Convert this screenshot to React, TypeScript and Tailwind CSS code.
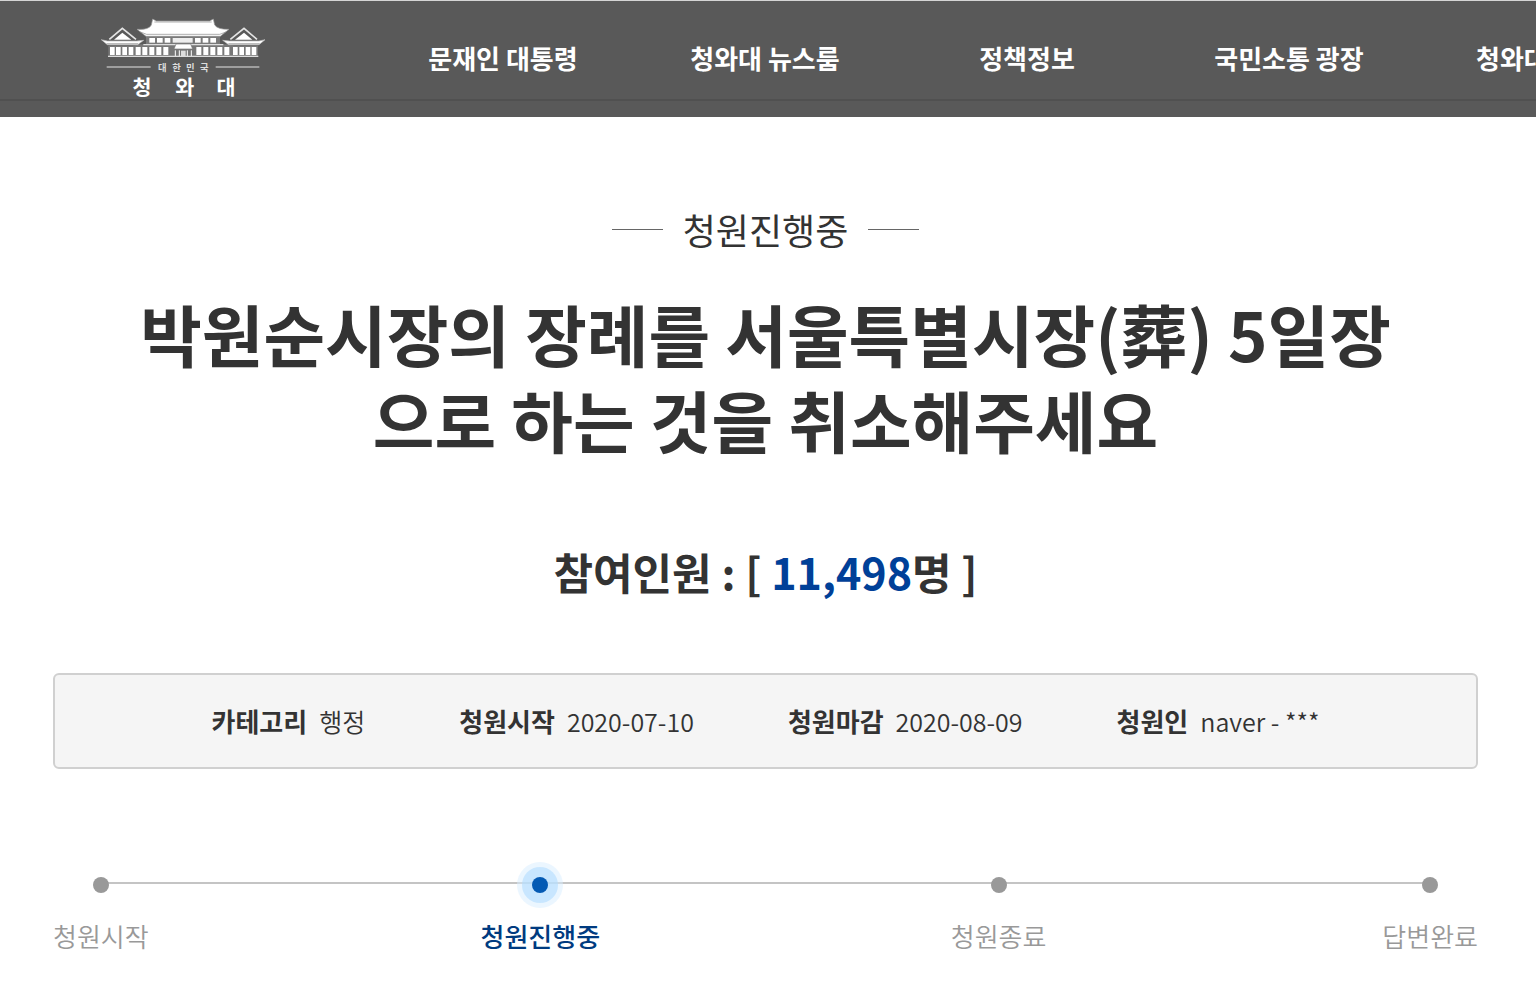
const NAV_ITEMS = ["문재인 대통령", "청와대 뉴스룸", "정책정보", "국민소통 광장"];

const META: Array<{ label: string; value: string }> = [
  { label: "카테고리", value: "행정" },
  { label: "청원시작", value: "2020-07-10" },
  { label: "청원마감", value: "2020-08-09" },
  { label: "청원인", value: "naver - ***" },
];

const STEPS = ["청원시작", "청원진행중", "청원종료", "답변완료"];
const CURRENT_STEP = 1;

const SIDE_WINDOWS = [60, 78, 97, 116];
const HALL_WINDOWS = [137, 157, 178, 199, 220, 319, 340, 361, 382, 403];
const UPPER_WINDOWS = [178, 201, 224, 315, 338, 361];

function Wing() {
  return (
    <g>
      <path d="M58 118 L97 85 L138 118" fill="none" stroke="#e4e4e4" strokeWidth="5" />
      <path d="M72 119 L97 98 L124 119 Z" fill="#fff" />
      <path d="M34 119 L52 123 H140 L161 121 L143 134 H52 Z" fill="#fff" stroke="#bbb" strokeWidth="2" />
      <path d="M50 131 H144" stroke="#888" strokeWidth="2" />
      <path d="M55 136 H135 V168 H55 Z" fill="#777" />
      {SIDE_WINDOWS.map((x) => (
        <rect key={x} x={x} y="141" width="14" height="24" fill="#fff" />
      ))}
    </g>
  );
}

function Logo() {
  return (
    <svg
      viewBox="30 48 498 252"
      className="h-[84px] w-[166px]"
      role="img"
      aria-label="대한민국 청와대"
    >
      <path d="M130 133 H430 V169 H130 Z" fill="#777" />
      {HALL_WINDOWS.map((x) => (
        <rect key={x} x={x} y="141" width="15" height="24" fill="#fff" />
      ))}
      <path d="M168 110 H390 V132 H168 Z" fill="#7a7a7a" />
      {UPPER_WINDOWS.map((x) => (
        <rect key={x} x={x} y="114" width="17" height="14" fill="#fff" />
      ))}
      <rect x="248" y="114" width="60" height="14" fill="#eee" />
      <path d="M160 134 H400" stroke="#ddd" strokeWidth="4" />
      <path
        d="M188 57 L199 63 H359 L370 57 L374 75 Q384 89 417 88 L391 109 H168 L141 88 Q177 90 184 75 Z"
        fill="#fff"
        stroke="#999"
        strokeWidth="2"
      />
      <path d="M193 66 H365" stroke="#888" strokeWidth="2" />
      <path d="M151 96 L170 103 H389 L408 96" fill="none" stroke="#888" strokeWidth="2" />
      <Wing />
      <g transform="translate(559 0) scale(-1 1)">
        <Wing />
      </g>
      <path d="M252 147 L258 132 H302 L308 147 Z" fill="#fff" stroke="#777" strokeWidth="2" />
      <path d="M252 149 H308 V168 H252 Z" fill="#777" />
      <path d="M256 168 V151 M268 168 V151 M292 168 V151 M304 168 V151" stroke="#fff" strokeWidth="3" />
      <path d="M273 152 H287 V168 H273 Z" fill="#ddd" />
      <path d="M54 169 H505" stroke="#ddd" strokeWidth="4" />
      <path d="M50 201 H182 M377 201 H508" stroke="#b5b5b5" strokeWidth="5" />
      <g fill="#ddd" fontSize="28" fontWeight="700" textAnchor="middle">
        <text x="217" y="212">대</text>
        <text x="260" y="212">한</text>
        <text x="301" y="212">민</text>
        <text x="343" y="212">국</text>
      </g>
      <g fill="#fff" fontSize="62" fontWeight="700" textAnchor="middle">
        <text x="156" y="286">청</text>
        <text x="284" y="286">와</text>
        <text x="408" y="286">대</text>
      </g>
    </svg>
  );
}

function Header() {
  return (
    <header className="overflow-hidden border-t border-[#d5d5d5] bg-[#595959] text-white">
      <div className="flex h-[100px] items-center border-b-2 border-[#505050] pt-4">
        <a href="#home" className="w-[372px] shrink-0 pl-[100px]">
          <Logo />
        </a>
        <nav className="flex min-w-0 grow pb-px text-[26px] font-bold whitespace-nowrap">
          {NAV_ITEMS.map((item) => (
            <a key={item} href="#menu" className="w-[262px] shrink-0 text-center">
              {item}
            </a>
          ))}
          <a href="#menu" className="shrink-0 pl-14">청와대</a>
        </nav>
      </div>
      <div className="h-4" />
    </header>
  );
}

function StepDot({ active }: { active: boolean }) {
  if (!active) {
    return <span className="my-[15px] size-4 rounded-full bg-[#999]" />;
  }
  return (
    <span className="flex size-[46px] items-center justify-center rounded-full bg-[#d8edff]/50">
      <span className="flex size-9 items-center justify-center rounded-full bg-[#b0dcff]/60">
        <span className="size-4 rounded-full bg-[#045ab4]" />
      </span>
    </span>
  );
}

function Progress() {
  return (
    <div className="relative mt-[93px]">
      <div className="absolute inset-x-12 top-5 h-0.5 bg-[#c4c4c4]" />
      <ol className="relative grid grid-cols-[30%_33%_1fr_auto] justify-items-start text-[26px] leading-[38px]">
        {STEPS.map((step, i) => (
          <li key={step} className="flex flex-col items-center gap-[9px] whitespace-nowrap">
            <StepDot active={i === CURRENT_STEP} />
            <span className={i === CURRENT_STEP ? "font-medium text-[#003b80]" : "font-[350] text-[#999]"}>
              {step}
            </span>
          </li>
        ))}
      </ol>
    </div>
  );
}

export default function App() {
  return (
    <div className="min-h-screen bg-white font-['Noto_Sans_CJK_KR',sans-serif] text-[#333]">
      <Header />
      <main className="pr-[58px] pb-10 pl-[53px]">
        <p className="flex items-center justify-center gap-5 pt-[85px] text-[36px] leading-[54px]">
          <span className="h-px w-[51px] bg-[#666]" />
          청원진행중
          <span className="h-px w-[51px] bg-[#666]" />
        </p>
        <h1 className="px-16 pt-[34px] text-center text-[67px] leading-[86px] font-bold">
          박원순시장의 장례를 서울특별시장(葬) 5일장으로 하는 것을 취소해주세요
        </h1>
        <h2 className="pt-[77px] text-center text-[43px] leading-[64px] font-bold">
          참여인원 : [ <span className="text-[#004098]">11,498</span>명 ]
        </h2>
        <dl className="mt-[70px] flex h-24 items-center justify-center gap-[94px] rounded-md border-2 border-[#d0d0d0] bg-[#f5f5f5]">
          {META.map((m) => (
            <div key={m.label} className="flex items-baseline gap-3 whitespace-nowrap">
              <dt className="text-[26px] font-bold">{m.label}</dt>
              <dd className="text-[25px] font-[350]">{m.value}</dd>
            </div>
          ))}
        </dl>
        <Progress />
      </main>
    </div>
  );
}
